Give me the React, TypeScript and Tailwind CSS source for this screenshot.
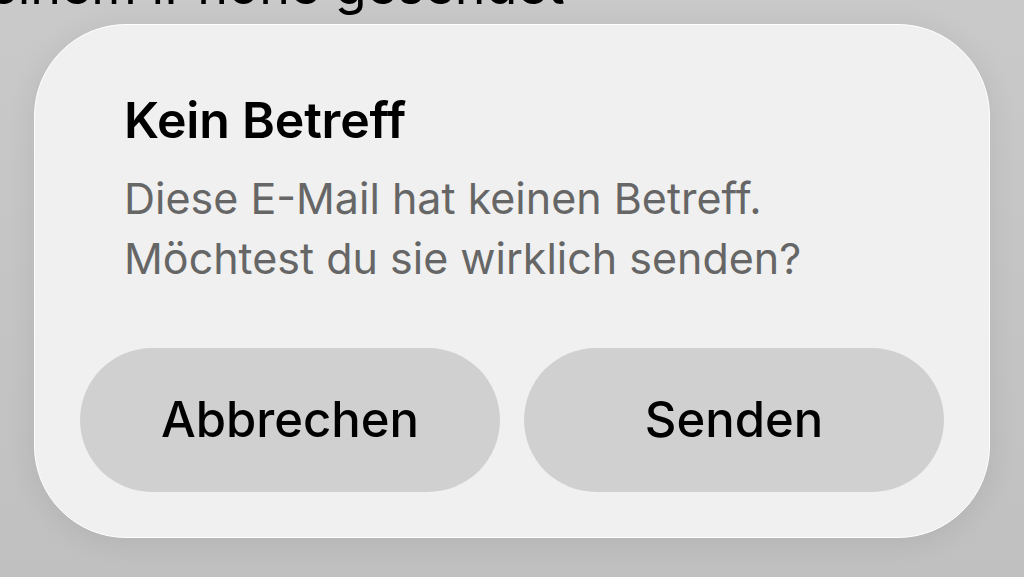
export default function App() {
  return (
    <div
      className="relative h-[577px] w-[1024px] overflow-hidden bg-gradient-to-b from-[#c9c9c9] to-[#c0c0c0]"
      style={{ fontFamily: "Inter, 'Noto Sans', sans-serif" }}
    >
      {/* message behind the sheet */}
      <div className="-mt-[44px] ml-[-168px] whitespace-nowrap text-[52px] leading-[60px] text-black">
        Von meinem iPhone gesendet
      </div>

      <div className="ml-[34px] mt-[8px] flex h-[514px] w-[956px] flex-col rounded-[92px] border-[1.5px] border-white bg-[#eff0ef] px-[45px] pt-[66px] shadow-[0_4px_30px_rgba(0,0,0,0.08)]">
        <div className="px-[44px]">
          <h1 className="text-[50px] font-semibold leading-[58px] tracking-[-0.2px] text-black">Kein Betreff</h1>
          <p className="mt-[19px] text-[43px] leading-[60px] text-[#666666]">
            Diese E-Mail hat keinen Betreff.
            <br />
            Möchtest du sie wirklich senden?
          </p>
        </div>

        <div className="mt-[60px] flex gap-[24px]">
          <button className="flex h-[144px] flex-1 items-center justify-center rounded-full bg-[#d0d0d0] text-[49px] font-medium text-black">
            Abbrechen
          </button>
          <button className="flex h-[144px] flex-1 items-center justify-center rounded-full bg-[#d0d0d0] text-[49px] font-medium text-black">
            Senden
          </button>
        </div>
      </div>
    </div>
  );
}
